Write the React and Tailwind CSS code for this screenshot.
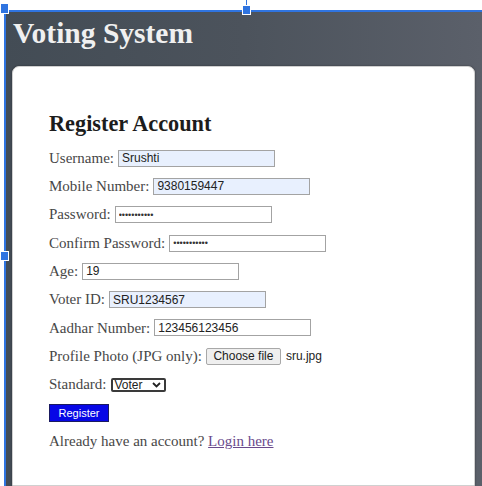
import React from "react";

const serif = "font-['Liberation_Serif','Times_New_Roman',serif]";
const sans = "font-['Liberation_Sans',Arial,sans-serif]";

function Field({ label, value, type = "text", filled = false }) {
  const pw = type === "password";
  return (
    <div className="flex h-[28.3px] items-center gap-[4px]">
      <span className="whitespace-nowrap">{label}</span>
      <input
        readOnly
        type={type}
        value={value}
        className={`h-[17px] w-[157px] border border-[#a3a3a3] px-[3px] outline-none ${sans} ${
          pw ? "text-[9px] text-[#333]" : "text-[12px] text-[#222]"
        } ${filled ? "bg-[#e8f0fe]" : "bg-white"}`}
      />
    </div>
  );
}

export default function App() {
  return (
    <div className="relative h-[486px] w-[482px] overflow-hidden bg-white">
      <div className="h-[10px]" />
      <div className="ml-[4px] flex h-[476px] flex-col border-l-2 border-t-2 border-[#2f74e0] bg-linear-to-r from-[#434c55] via-[#4c535c] to-[#5b606a]">
        <h1 className={`${serif} ml-[7px] mt-[7px] text-[29.5px] font-bold leading-[29px] text-[#f0f0f0]`}>
          Voting System
        </h1>
        <div className={`${serif} ml-[6px] mr-[7px] mt-[18px] flex-1 rounded-t-[7px] border border-[#d0d0d0] bg-white pl-[36px] pt-[46px] text-[15px] text-[#474747] shadow-[0_0_2px_rgba(0,0,0,0.4)]`}>
          <h2 className="text-[22.3px] font-bold leading-[22px] text-[#1c1c1c]">Register Account</h2>
          <div className="mt-[9px] flex flex-col">
            <Field label="Username:" value="Srushti" filled />
            <Field label="Mobile Number:" value="9380159447" filled />
            <Field label="Password:" value="abcdefghijk" type="password" />
            <Field label="Confirm Password:" value="abcdefghijk" type="password" />
            <Field label="Age:" value="19" />
            <Field label="Voter ID:" value="SRU1234567" filled />
            <Field label="Aadhar Number:" value="123456123456" />
            <div className="flex h-[28.3px] items-center gap-[4px]">
              <span className="whitespace-nowrap">Profile Photo (JPG only):</span>
              <span className={`${sans} flex h-[17px] w-[75px] items-center justify-center rounded-[2px] border border-[#a8a8a8] bg-[#efefef] text-[12px] text-[#222]`}>
                Choose file
              </span>
              <span className={`${sans} ml-[1px] text-[12px] text-[#222]`}>sru.jpg</span>
            </div>
            <div className="flex h-[28.3px] items-center gap-[4px]">
              <span>Standard:</span>
              <span className={`${sans} flex h-[14px] w-[55px] items-center justify-between rounded-[2px] border-2 border-[#3a3a3a] pl-[2px] pr-[3px] text-[12px] leading-none text-[#222]`}>
                Voter
                <svg width="9" height="6" viewBox="0 0 9 6">
                  <path d="M1 1l3.5 3.5L8 1" fill="none" stroke="#222" strokeWidth="1.8" />
                </svg>
              </span>
            </div>
            <div className="flex h-[28.3px] items-center">
              <span className={`${sans} flex h-[18px] w-[60px] items-center justify-center border border-[#1a1a60] bg-[#0707e6] text-[11px] text-white`}>
                Register
              </span>
            </div>
            <div className="flex h-[28.3px] items-center">
              <span>
                Already have an account?{" "}
                <a href="#" className="text-[#6a4a8c] underline">
                  Login here
                </a>
              </span>
            </div>
          </div>
        </div>
      </div>
      <div className="absolute left-[246px] top-0 h-[5px] w-[1px] bg-[#2f74e0]" />
      <div className="absolute left-[242px] top-[5px] h-[10px] w-[9px] border border-white bg-[#2f74e0]" />
      <div className="absolute left-0 top-[3px] h-[11px] w-[9px] border border-white bg-[#2f74e0]" />
      <div className="absolute left-0 top-[251px] h-[10px] w-[9px] border border-white bg-[#2f74e0]" />
    </div>
  );
}
